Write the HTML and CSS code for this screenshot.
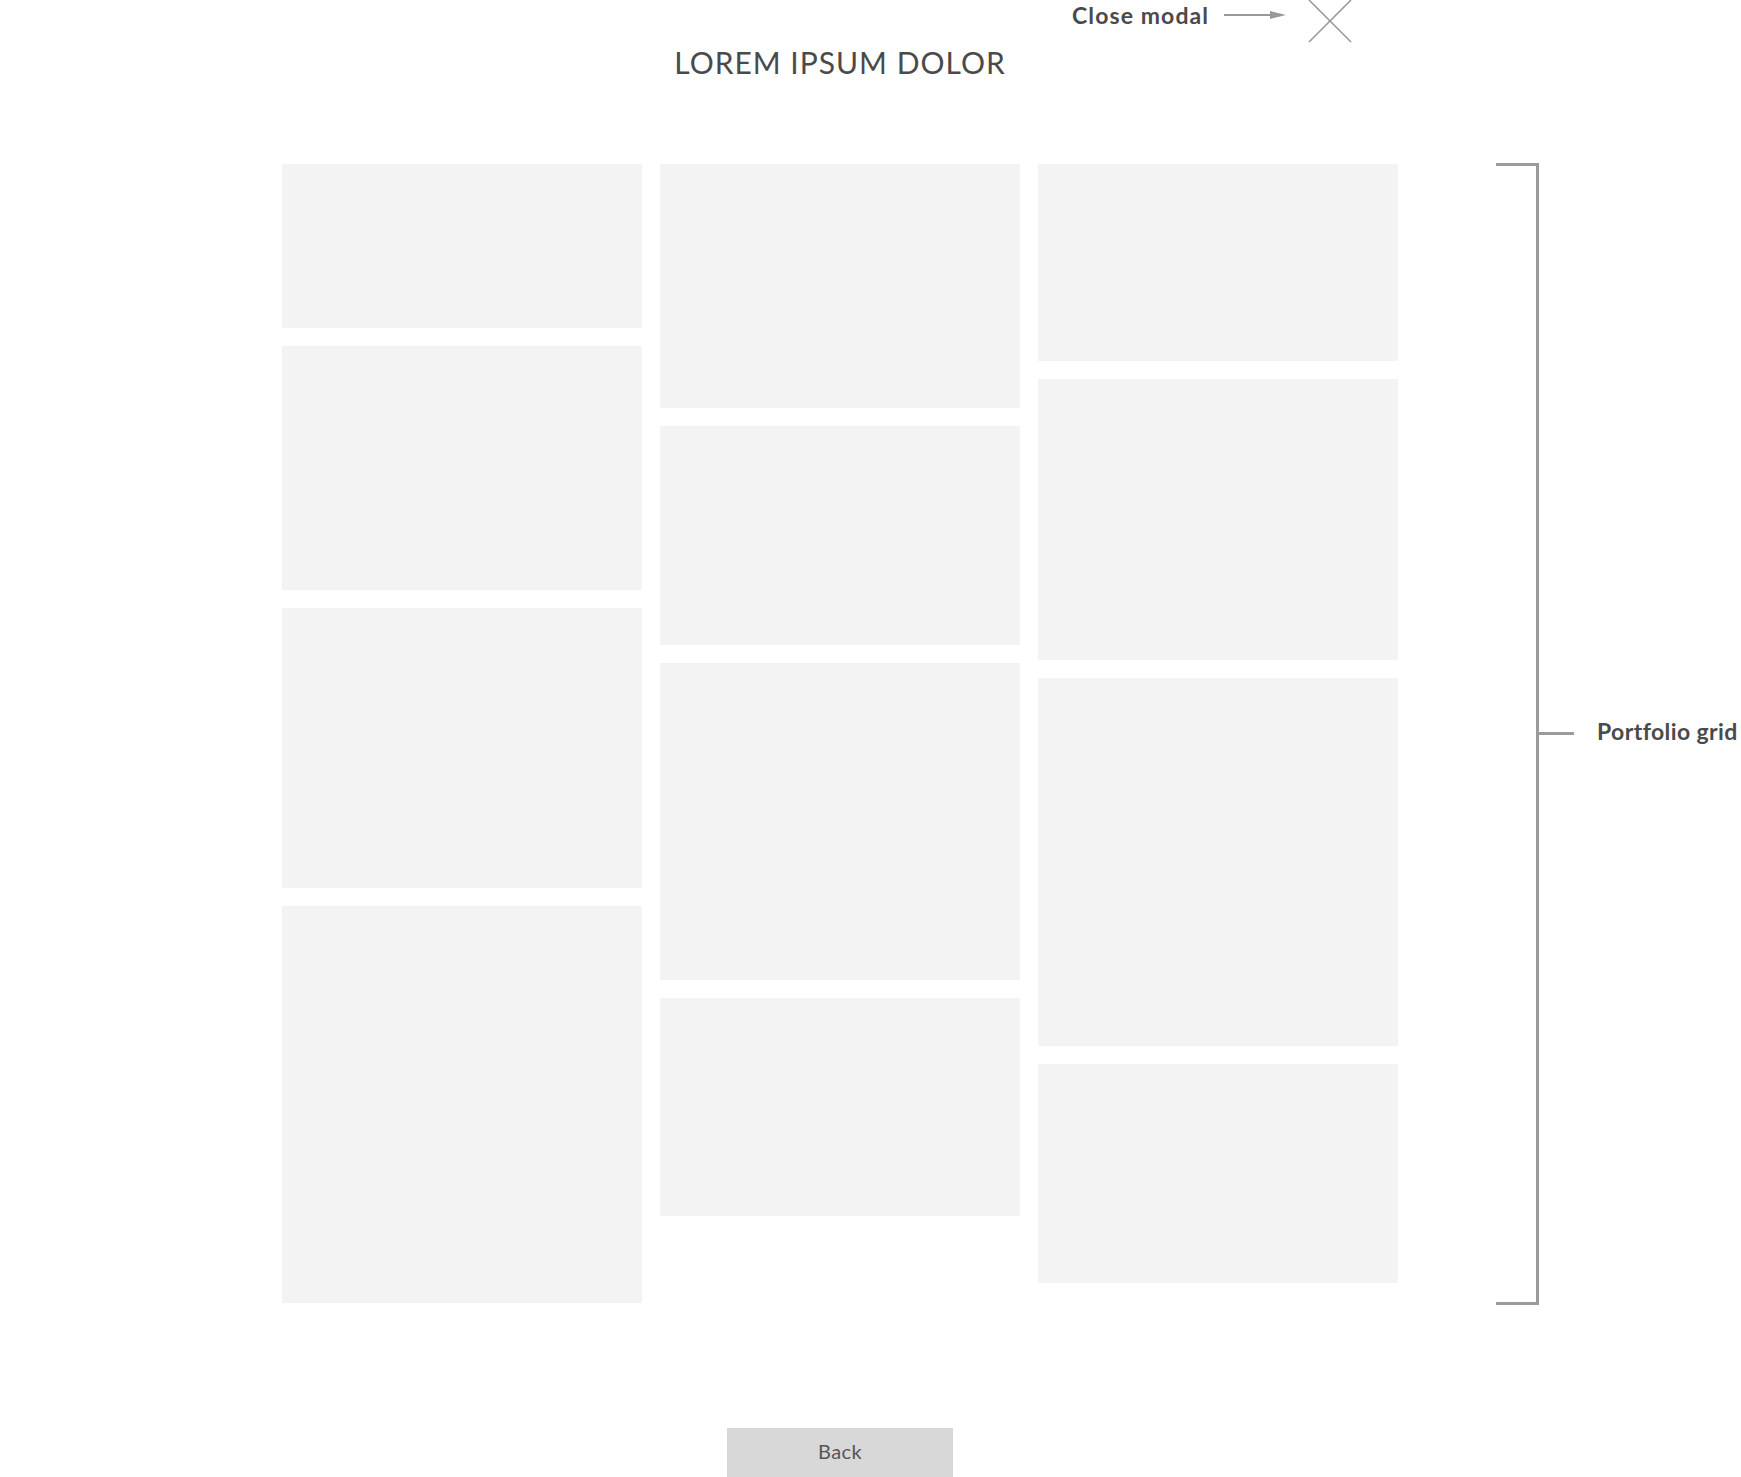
FILE: index.html
```html
<!DOCTYPE html>
<html lang="en">
<head>
<meta charset="utf-8">
<title>Portfolio modal</title>
<link rel="stylesheet" href="styles.css">
</head>
<body>
<div class="page">
  <div class="note note-close">
    <span class="note-label">Close modal</span>
    <svg class="note-arrow" width="62" height="10" viewBox="0 0 62 10"><line x1="0" y1="5" x2="50" y2="5" stroke="#999" stroke-width="2"/><polygon points="46,1 62,5 46,9" fill="#999"/></svg>
    <svg class="close-x" width="44" height="44" viewBox="0 0 44 44"><line x1="1" y1="1" x2="43" y2="43" stroke="#999" stroke-width="1.6"/><line x1="43" y1="1" x2="1" y2="43" stroke="#999" stroke-width="1.6"/></svg>
  </div>

  <div class="note-bracket">
    <span class="bracket-label">Portfolio grid</span>
  </div>

  <main class="modal">
    <h1 class="title">LOREM IPSUM DOLOR</h1>
    <div class="grid">
      <div class="col">
        <div class="tile h164"></div>
        <div class="tile h244"></div>
        <div class="tile h280"></div>
        <div class="tile h397"></div>
      </div>
      <div class="col">
        <div class="tile h244"></div>
        <div class="tile h219"></div>
        <div class="tile h317"></div>
        <div class="tile h218"></div>
      </div>
      <div class="col">
        <div class="tile h197"></div>
        <div class="tile h281"></div>
        <div class="tile h368"></div>
        <div class="tile h219"></div>
      </div>
    </div>
    <div class="actions">
      <button class="back">Back</button>
    </div>
  </main>
</div>
</body>
</html>
```

FILE: styles.css
```css
html, body {
  margin: 0;
  padding: 0;
  background: #ffffff;
  overflow: hidden;
}
body {
  font-family: Lato, "Noto Sans", sans-serif;
  color: #4a4a4a;
  width: 1741px;
  height: 1477px;
}
.page {
  position: relative;
  width: 1741px;
  height: 1477px;
}
.modal {
  padding-left: 282px;
  width: 1116px;
  display: flex;
  flex-direction: column;
}
.title {
  margin: 44px 0 0 0;
  font-size: 30px;
  line-height: 36px;
  font-weight: 400;
  text-align: center;
  color: #4a4a4a;
  letter-spacing: 1px;
}
.grid {
  margin-top: 84px;
  display: flex;
  gap: 18px;
  align-items: flex-start;
}
.col {
  width: 360px;
  display: flex;
  flex-direction: column;
  gap: 18px;
}
.tile { background: #f3f3f3; }
.h164 { height: 164px; }
.h197 { height: 197px; }
.h218 { height: 218px; }
.h219 { height: 219px; }
.h244 { height: 244px; }
.h280 { height: 280px; }
.h281 { height: 281px; }
.h317 { height: 317px; }
.h368 { height: 368px; }
.h397 { height: 397px; }
.actions {
  margin-top: 125px;
  display: flex;
  justify-content: center;
}
.back {
  width: 226px;
  height: 50px;
  border: none;
  background: #d8d8d8;
  font-family: Lato, "Noto Sans", sans-serif;
  font-size: 20px;
  font-weight: 400;
  letter-spacing: 0.4px;
  color: #555555;
  padding: 0 0 4px 0;
}

/* annotations */
.note-close {
  position: absolute;
  left: 1072px;
  top: 0;
  height: 44px;
  display: flex;
  align-items: flex-start;
}
.note-label {
  font-size: 23px;
  font-weight: 700;
  line-height: 30px;
  letter-spacing: 1.1px;
  color: #4a4a4a;
  width: 150px;
}
.note-arrow {
  margin-top: 10px;
  margin-left: 2px;
}
.close-x {
  margin-left: 22px;
  margin-top: -1px;
}
.note-bracket {
  position: absolute;
  left: 1496px;
  top: 163px;
  width: 40px;
  height: 1136px;
  border-top: 3px solid #9b9b9b;
  border-right: 3px solid #9b9b9b;
  border-bottom: 3px solid #9b9b9b;
}
.note-bracket::after {
  content: "";
  position: absolute;
  left: 43px;
  top: 566px;
  width: 35px;
  height: 3px;
  background: #9b9b9b;
}
.bracket-label {
  position: absolute;
  left: 101px;
  top: 551px;
  font-size: 23px;
  font-weight: 700;
  line-height: 28px;
  letter-spacing: 0.4px;
  white-space: nowrap;
  color: #4a4a4a;
}
```
